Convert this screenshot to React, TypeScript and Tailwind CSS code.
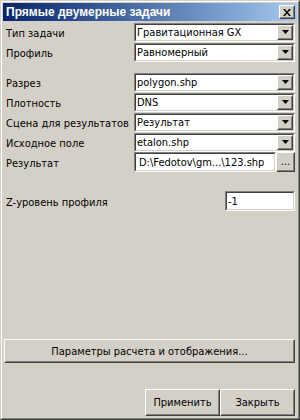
import React from "react";

const font = { fontFamily: '"Liberation Sans", Arial, sans-serif' };
const tf = { fontFamily: '"DejaVu Sans Condensed", "DejaVu Sans", sans-serif', fontStretch: "condensed" as const };

function Raised({ className = "", children }: { className?: string; children?: React.ReactNode }) {
  return (
    <div className={`border border-t-white border-l-white border-b-[#404040] border-r-[#404040] bg-[#d4d0c8] ${className}`}>
      <div className="w-full h-full border border-t-[#d4d0c8] border-l-[#d4d0c8] border-b-[#808080] border-r-[#808080] flex items-center justify-center">
        {children}
      </div>
    </div>
  );
}

function Sunken({ className = "", children }: { className?: string; children?: React.ReactNode }) {
  return (
    <div className={`border border-t-[#808080] border-l-[#808080] border-b-white border-r-white ${className}`}>
      <div className="w-full h-full border border-t-[#404040] border-l-[#404040] border-b-[#d4d0c8] border-r-[#d4d0c8] bg-white flex items-center">
        {children}
      </div>
    </div>
  );
}

function T({ children, className = "" }: { children: React.ReactNode; className?: string }) {
  return (
    <span style={tf} className={`text-[11px] text-black leading-none whitespace-nowrap ${className}`}>
      {children}
    </span>
  );
}

function Combo({ value }: { value: string }) {
  return (
    <Sunken className="h-[19px] w-full">
      <T className="flex-1 pl-[1px] overflow-hidden">{value}</T>
      <Raised className="w-[16px] h-[15px]">
        <svg width="7" height="4" viewBox="0 0 7 4">
          <path d="M0 0h7L3.5 4z" fill="black" />
        </svg>
      </Raised>
    </Sunken>
  );
}

function Row({ label, children }: { label: string; children: React.ReactNode }) {
  return (
    <div className="flex items-center h-[20px]">
      <div className="w-[131px] pl-[3px]"><T>{label}</T></div>
      <div className="w-[161px]">{children}</div>
    </div>
  );
}

export default function App() {
  return (
    <div style={font} className="w-[300px] h-[420px] border border-t-[#d4d0c8] border-l-[#d4d0c8] border-b-[#404040] border-r-[#404040] bg-[#d4d0c8]">
      <div className="w-full h-full border border-t-white border-l-white border-b-[#808080] border-r-[#808080] p-[1px] flex flex-col">
        <div className="h-[18px] flex items-center justify-between bg-gradient-to-r from-[#0a246a] to-[#a6caf0] pl-[3px] pr-[2px]">
          <span className="text-white font-bold text-[12px] leading-none whitespace-nowrap">Прямые двумерные задачи</span>
          <Raised className="w-[16px] h-[14px]">
            <svg width="8" height="7" viewBox="0 0 8 7">
              <path d="M0 0h2l2 2.5L6 0h2L5 3.5 8 7H6L4 4.5 2 7H0l3-3.5z" fill="black" />
            </svg>
          </Raised>
        </div>
        <div className="flex flex-col mt-[1px]">
          <Row label="Тип задачи"><Combo value="Гравитационная GX" /></Row>
          <Row label="Профиль"><Combo value="Равномерный" /></Row>
          <div className="h-[10px]" />
          <Row label="Разрез"><Combo value="polygon.shp" /></Row>
          <Row label="Плотность"><Combo value="DNS" /></Row>
          <Row label="Сцена для результатов"><Combo value="Результат" /></Row>
          <Row label="Исходное поле"><Combo value="etalon.shp" /></Row>
          <div className="flex items-center h-[20px]">
            <div className="w-[131px] pl-[3px]"><T>Результат</T></div>
            <div className="w-[161px] flex items-center">
              <Sunken className="h-[20px] flex-1">
                <T className="pl-[3px]">D:\Fedotov\gm...\123.shp</T>
              </Sunken>
              <Raised className="w-[19px] h-[20px]">
                <T className="pb-[2px]">...</T>
              </Raised>
            </div>
          </div>
          <div className="flex items-center h-[20px] mt-[19px]">
            <div className="flex-1 pl-[3px]"><T>Z-уровень профиля</T></div>
            <Sunken className="w-[70px] h-[20px] mr-[2px]">
              <T className="pl-[1px]">-1</T>
            </Sunken>
          </div>
        </div>
        <div className="flex-1" />
        <div className="pl-[1px] pr-[2px]">
          <Raised className="h-[24px] w-full">
            <T>Параметры расчета и отображения...</T>
          </Raised>
        </div>
        <div className="h-[26px]" />
        <div className="flex justify-end pr-[2px] mb-[1px]">
          <Raised className="w-[75px] h-[27px]">
            <T>Применить</T>
          </Raised>
          <Raised className="w-[75px] h-[27px]">
            <T>Закрыть</T>
          </Raised>
        </div>
      </div>
    </div>
  );
}
